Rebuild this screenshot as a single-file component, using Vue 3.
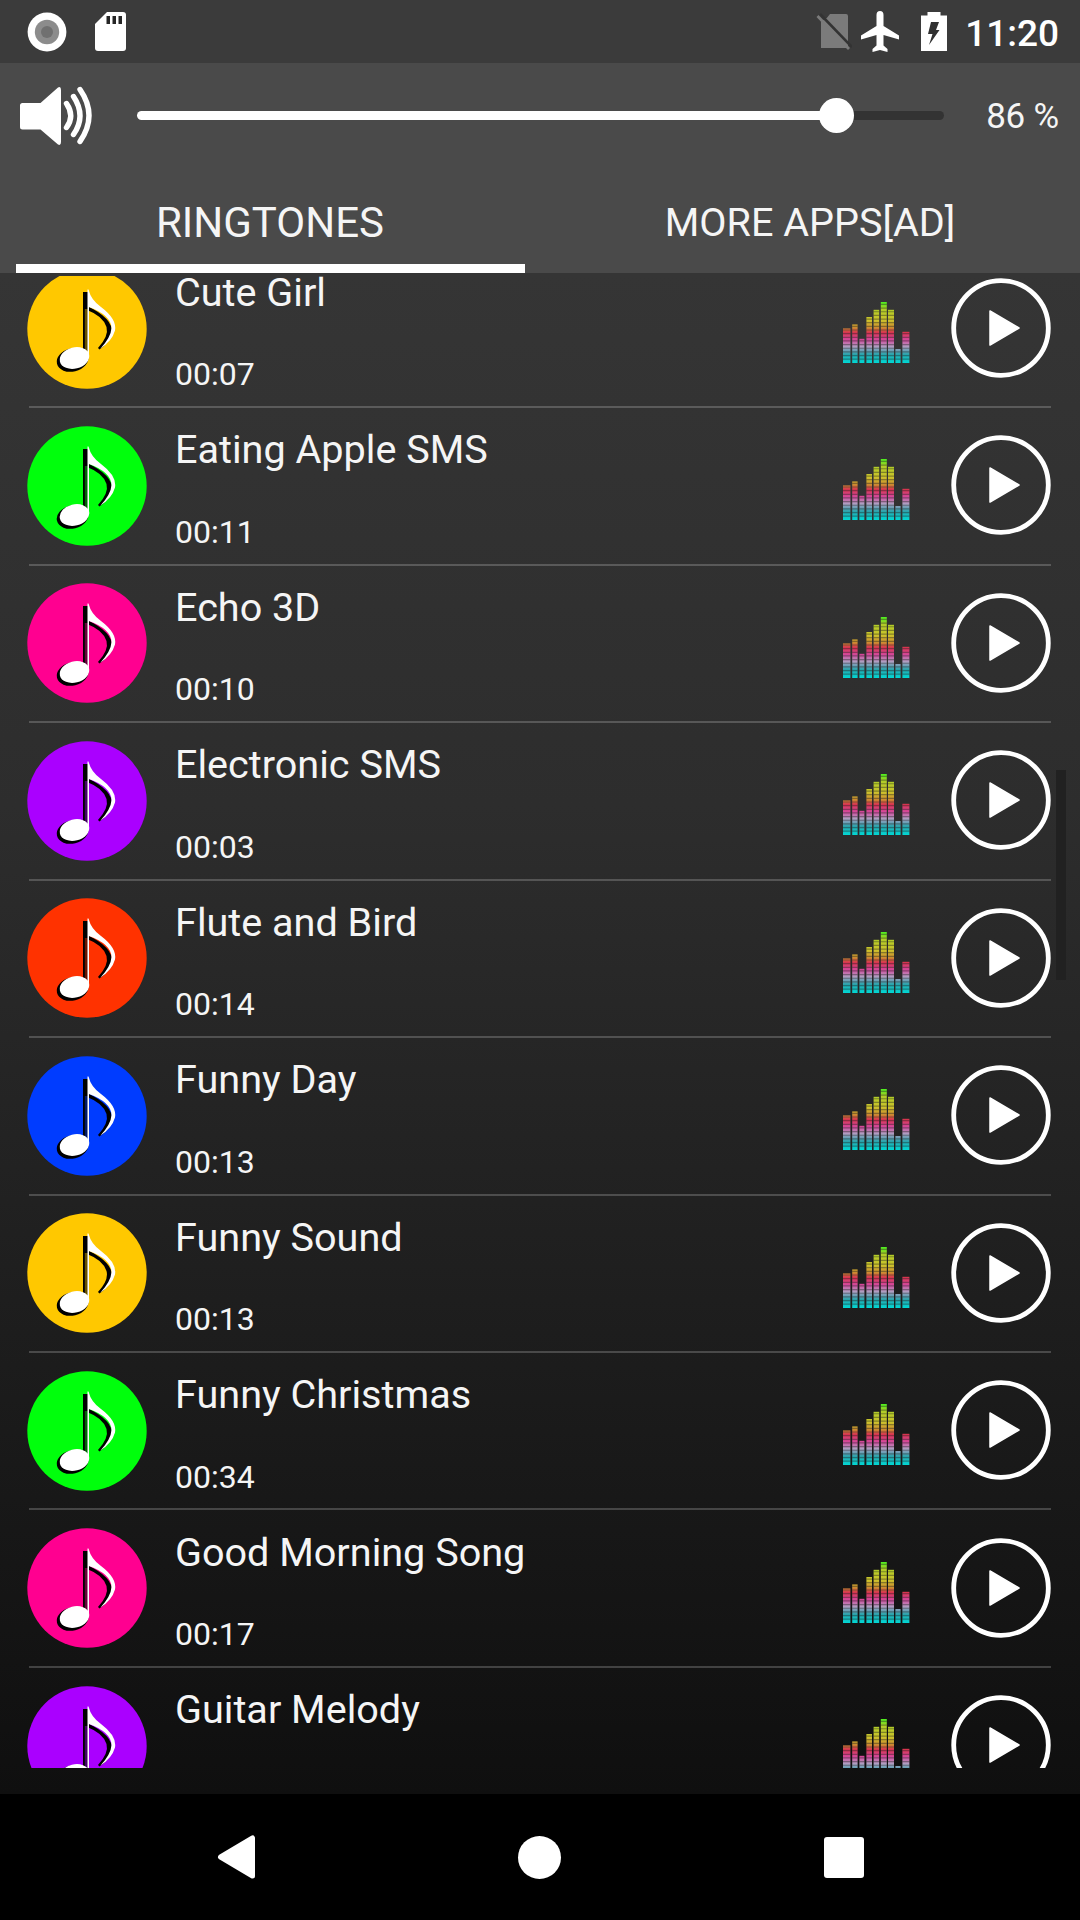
<script setup>
const colors = { yellow: '#ffc800', green: '#00ff0c', pink: '#ff0090', purple: '#aa00ff', red: '#ff3200', blue: '#003cff' }

const songs = [
  { title: 'Cute Girl', time: '00:07', color: colors.yellow },
  { title: 'Eating Apple SMS', time: '00:11', color: colors.green },
  { title: 'Echo 3D', time: '00:10', color: colors.pink },
  { title: 'Electronic SMS', time: '00:03', color: colors.purple },
  { title: 'Flute and Bird', time: '00:14', color: colors.red },
  { title: 'Funny Day', time: '00:13', color: colors.blue },
  { title: 'Funny Sound', time: '00:13', color: colors.yellow },
  { title: 'Funny Christmas', time: '00:34', color: colors.green },
  { title: 'Good Morning Song', time: '00:17', color: colors.pink },
  { title: 'Guitar Melody', time: '', color: colors.purple },
]

// x, width and top of every equalizer bar inside a 67x61 box
const bars = [
  [0, 7.4, 26.4], [9.2, 5.4, 22.4], [16.4, 5, 36.8], [23.4, 5.6, 15], [30.6, 5.6, 7.8],
  [37.8, 6, 0], [45, 6, 7.8], [52.4, 5.2, 47], [59.4, 7, 29.8],
]
const gaps = Array.from({ length: 16 }, (_, i) => 57.2 - i * 3.65)
const gapPath = bars
  .map(([x, w, top]) => gaps.filter((g) => g > top + 1).map((g) => `M${x} ${g}h${w}`).join(''))
  .join('')
</script>

<template>
  <div class="screen">
    <svg class="defs" width="0" height="0">
      <defs>
        <linearGradient id="eq" gradientUnits="userSpaceOnUse" x1="0" y1="0" x2="0" y2="61">
          <stop offset="0" stop-color="#4cf020" />
          <stop offset="0.06" stop-color="#7cdc20" />
          <stop offset="0.12" stop-color="#b0cc28" />
          <stop offset="0.3" stop-color="#ccc22c" />
          <stop offset="0.42" stop-color="#cc8c30" />
          <stop offset="0.5" stop-color="#d83450" />
          <stop offset="0.62" stop-color="#d4489c" />
          <stop offset="0.73" stop-color="#b09cc0" />
          <stop offset="0.86" stop-color="#28a4ac" />
          <stop offset="1" stop-color="#00d8d4" />
        </linearGradient>
      </defs>
    </svg>

    <header class="status">
      <div class="group">
        <svg width="40" height="40" viewBox="0 0 40 40">
          <circle cx="20" cy="20" r="19.4" fill="#fff" />
          <circle cx="20" cy="20" r="12.2" fill="#8c8c8c" />
          <circle cx="20" cy="20" r="6" fill="#707070" />
        </svg>
        <svg class="sd" width="31" height="39" viewBox="0 0 31 39">
          <path d="M12 0H28Q31 0 31 3V36Q31 39 28 39H3Q0 39 0 36V12Z" fill="#fff" />
          <path d="M11.5 4h3.5v8h-3.5zM17.5 4H21v8h-3.5zM23.500 4H27v8h-3.500z" fill="#262626" />
        </svg>
      </div>
      <div class="group right">
        <svg class="nosim" width="36" height="38" viewBox="0 0 36 38">
          <path d="M14 1H30Q32 1 32 3V31L10 6ZM5 10L29 35H7Q5 35 5 33Z" fill="#7b7b7b" />
          <path d="M5 9L10 5L32 29V35H5Z" fill="#7b7b7b" />
          <path d="M4 1L36 34" stroke="#333" stroke-width="2.6" />
          <path d="M1.500 3L33 36" stroke="#7b7b7b" stroke-width="2.800" />
        </svg>
        <svg class="plane" width="40" height="41" viewBox="0 0 40 41">
          <path d="M20 0Q23.500 0 23.500 4V15L39 24.500V28.500L23.500 24V34.500L27.500 38V41L20 39L12.500 41V38L16.500 34.500V24L1 28.500V24.500L16.500 15V4Q16.500 0 20 0Z" fill="#fff" />
        </svg>
        <svg class="battery" width="26" height="39" viewBox="0 0 26 39">
          <path d="M6.500 0H19.500V3.500H26V39H0V3.500H6.500Z" fill="#fff" />
          <path d="M10 10H18L15 18H18.500L8 33L11.500 22H7Z" fill="#303030" />
        </svg>
        <span class="clock">11:20</span>
      </div>
    </header>

    <section class="top">
      <div class="volume">
        <svg class="speaker" width="76" height="62" viewBox="0 0 76 62">
          <path d="M3.500 17H21.500L39 1.500Q42 0 42 4V56Q42 60 39 58.500L21.500 43.500H3.500Q1 43.500 1 41V19.500Q1 17 3.500 17Z" fill="#fff" />
          <g fill="none" stroke="#fff" stroke-width="5.400" stroke-linecap="round">
            <path d="M47.500 17.500Q56 30 47.500 41.500" />
            <path d="M54.500 10.500Q67.500 30 54.500 48.500" />
            <path d="M61 3.500Q79 29.500 61 55.500" />
          </g>
        </svg>
        <div class="track">
          <div class="fill"><div class="thumb"></div></div>
        </div>
        <span class="percent">86 %</span>
      </div>
      <nav class="tabs">
        <div class="tab active"><span>RINGTONES</span></div>
        <div class="tab"><span>MORE APPS[AD]</span></div>
      </nav>
    </section>

    <main class="body">
      <div class="viewport">
        <div class="rows">
          <article v-for="song in songs" :key="song.title" class="row">
            <svg class="avatar" width="120" height="120" viewBox="0 0 120 120">
              <circle cx="60" cy="60" r="59.700" :fill="song.color" />
              <g fill="#000">
                <ellipse cx="45.500" cy="91" rx="16" ry="11.500" transform="rotate(-14 45.500 91)" />
                <path d="M56 23H61V82H56Z" />
                <path d="M60 37Q86 49 85 64Q83 73 72.500 80.500L71 79Q82 67 79.500 58Q76 47 60 41Z" />
              </g>
              <path d="M57.800 40H61V82H57.800Z" :fill="song.color" opacity="0.4" />
              <g fill="#fff">
                <ellipse cx="47.500" cy="89" rx="15" ry="10.600" transform="rotate(-14 47.500 89)" />
                <path d="M60.500 20.500H61.500Q64 31 74 38Q90 50 88 61.500Q85 72 73.500 79.500Q84 68 84.500 59Q84 46 62 38V88H60.500Z" />
              </g>
            </svg>
            <div class="info">
              <h2>{{ song.title }}</h2>
              <p>{{ song.time }}</p>
            </div>
            <svg class="eq" width="67" height="61" viewBox="0 0 67 61">
              <rect v-for="b in bars" :key="b[0]" :x="b[0]" :y="b[2]" :width="b[1]" :height="61 - b[2]" fill="url(#eq)" />
              <path :d="gapPath" stroke="#202020" stroke-width="1.200" opacity="0.4" />
            </svg>
            <svg class="play" width="100" height="100" viewBox="0 0 100 100">
              <circle cx="50" cy="50" r="47.300" fill="none" stroke="#fff" stroke-width="4.800" />
              <path d="M39 33L68 50L39 67Z" fill="#fff" stroke="#fff" stroke-width="1.500" stroke-linejoin="round" />
            </svg>
          </article>
        </div>
      </div>
      <div class="scrollbar"></div>
    </main>

    <footer class="navbar">
      <svg width="38" height="44" viewBox="0 0 38 44">
        <path d="M3.500 22L35.500 3V41Z" fill="#fff" stroke="#fff" stroke-width="5" stroke-linejoin="round" />
      </svg>
      <div class="home"></div>
      <div class="recent"></div>
    </footer>
  </div>
</template>

<style>
body { margin: 0; background: #000; }
</style>

<style scoped>
.screen {
  width: 1080px;
  height: 1920px;
  display: flex;
  flex-direction: column;
  overflow: hidden;
  color: #fff;
  font-family: Roboto, "Liberation Sans", sans-serif;
  background: #000;
}
.defs { position: absolute; }
svg { display: block; flex: none; }
.status {
  height: 63px;
  box-sizing: border-box;
  padding: 0 21px 0 27px;
  display: flex;
  justify-content: space-between;
  background: #3b3b3b;
}
.group { display: flex; align-items: center; gap: 28px; }
.group.right { gap: 0; }
.nosim { margin-right: 8px; }
.plane { margin-right: 21px; }
.battery { margin-right: 18px; }
.clock { font-size: 37px; font-weight: 500; line-height: 44px; padding-top: 4px; }
.top { height: 210px; background: #4a4a4a; display: flex; flex-direction: column; }
.volume { height: 105px; display: flex; align-items: center; padding: 0 21px 0 18.500px; }
.speaker { margin: 2px 42.500px 0 0; }
.track { width: 807px; height: 9px; border-radius: 5px; background: #333; }
.fill {
  width: 700px;
  height: 9px;
  border-radius: 5px;
  background: #fff;
  display: flex;
  align-items: center;
  justify-content: flex-end;
}
.thumb { flex: none; width: 35px; height: 35px; border-radius: 50%; background: #fff; margin-right: -17px; }
.percent { margin-left: auto; font-size: 35px; letter-spacing: -0.200px; line-height: 40px; padding-top: 3px; color: #f5f5f5; }
.tabs { height: 105px; display: flex; }
.tab {
  width: 540px;
  box-sizing: border-box;
  padding: 31px 15px 0;
  display: flex;
  flex-direction: column;
  align-items: center;
  font-size: 39.600px;
  line-height: 47px;
  color: #f5f5f5;
}
.tab.active { font-size: 42px; line-height: 49px; justify-content: space-between; padding-top: 30px; }
.tab.active::after { content: ""; width: 509px; height: 9px; background: #fff; }
.body {
  flex: 1;
  position: relative;
  box-sizing: border-box;
  padding-top: 3px;
  background: linear-gradient(#353535, #2d2d2d 35%, #0f0f0f);
}
.viewport { height: 1491.500px; overflow: hidden; }
.rows { margin-top: -25.200px; }
.row {
  height: 157.460px;
  box-sizing: border-box;
  margin: 0 29px;
  display: flex;
  align-items: center;
  border-bottom: 2px solid rgba(255, 255, 255, 0.2);
}
.avatar { margin-left: -2px; }
.info { align-self: flex-start; flex: 1; padding: 18.200px 0 0 28px; }
h2, p { margin: 0; font-weight: 400; color: #f5f5f5; }
h2 { font-size: 39.600px; line-height: 47px; }
p { margin-top: 39.400px; font-size: 32px; line-height: 38px; }
.eq { margin: 8px 41px 0 0; }
.play { margin-top: -1px; }
.scrollbar {
  position: absolute;
  right: 14px;
  top: 497px;
  width: 10px;
  height: 210px;
  background: #212121;
}
.navbar { height: 126px; background: #000; display: flex; align-items: center; padding-left: 217px; }
.home { width: 43px; height: 43px; border-radius: 50%; background: #fff; margin-left: 263px; }
.recent { width: 40px; height: 41px; border-radius: 3px; background: #fff; margin-left: 263px; }
</style>
